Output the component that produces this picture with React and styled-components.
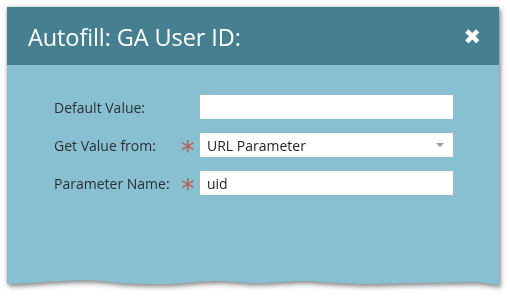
import React from "react";
import styled, { createGlobalStyle } from "styled-components";

const Global = createGlobalStyle`
  html, body { margin: 0; padding: 0; background: #ffffff; }
  body { font-family: "Open Sans", "Noto Sans", sans-serif; }
`;

const Page = styled.div`
  width: 510px;
  height: 296px;
  padding: 7px 0 0 7px;
  box-sizing: border-box;
`;

const Dialog = styled.div`
  width: 492px;
  display: flex;
  flex-direction: column;
  filter: drop-shadow(0 0 2px rgba(0, 0, 0, 0.25)) drop-shadow(2px 3px 2px rgba(0, 0, 0, 0.35));
`;

const Header = styled.div`
  height: 58px;
  background: #467f8f;
  display: flex;
  align-items: center;
  justify-content: space-between;
  padding: 0 18px 0 21px;
  box-sizing: border-box;
`;

const Title = styled.div`
  color: #ffffff;
  font-size: 23.5px;
  letter-spacing: -0.1px;
  margin-top: 1px;
`;

const Close = styled.div`
  color: #ffffff;
  font-size: 21px;
  font-weight: bold;
  line-height: 1;
  margin-top: 2px;
  font-family: "DejaVu Sans", sans-serif;
`;

const Body = styled.div`
  background: #88c0d2;
  height: 215px;
  padding: 30px 0 0 47px;
  box-sizing: border-box;
  display: flex;
  flex-direction: column;
  gap: 14px;
`;

const Row = styled.div`
  display: flex;
  align-items: center;
  height: 24px;
`;

const Label = styled.div`
  width: 127px;
  font-size: 14px;
  color: #2b2f33;
`;

const Req = styled.div`
  width: 19px;
  color: #c8574f;
  font-size: 27px;
  line-height: 1;
  height: 24px;
  display: flex;
  align-items: center;
  padding-top: 11px;
  box-sizing: border-box;
  font-family: "DejaVu Sans", sans-serif;
`;

const Field = styled.div`
  width: 253px;
  height: 24px;
  background: #ffffff;
  display: flex;
  align-items: center;
  justify-content: space-between;
  padding: 0 9px 0 7px;
  box-sizing: border-box;
  font-size: 14px;
  color: #1f1f1f;
`;

const Arrow = styled.span`
  width: 0;
  height: 0;
  border-left: 4px solid transparent;
  border-right: 4px solid transparent;
  border-top: 4px solid #9a9a9a;
  margin-top: -1px;
`;

const Torn = styled.svg`
  display: block;
  width: 492px;
  height: 6px;
`;

export default function App() {
  return (
    <>
      <Global />
      <Page>
        <Dialog>
          <Header>
            <Title>Autofill: GA User ID:</Title>
            <Close>✖</Close>
          </Header>
          <Body>
            <Row>
              <Label>Default Value:</Label>
              <Req />
              <Field />
            </Row>
            <Row>
              <Label>Get Value from:</Label>
              <Req>*</Req>
              <Field>
                URL Parameter
                <Arrow />
              </Field>
            </Row>
            <Row>
              <Label>Parameter Name:</Label>
              <Req>*</Req>
              <Field>uid</Field>
            </Row>
          </Body>
          <Torn viewBox="0 0 492 6" preserveAspectRatio="none">
            <path
              d="M0 0 H492 V5 C485 4 478 3 470 2 C450 2 430 3 410 3 C395 3 380 4 365 4 C340 4 320 2 300 1 C280 1 265 3 250 3 C235 3 225 1 210 1 C190 1 175 4 160 4 C140 4 120 4 105 2 C90 0 70 0 55 1 C40 1 25 4 0 4 Z"
              fill="#88c0d2"
            />
          </Torn>
        </Dialog>
      </Page>
    </>
  );
}
